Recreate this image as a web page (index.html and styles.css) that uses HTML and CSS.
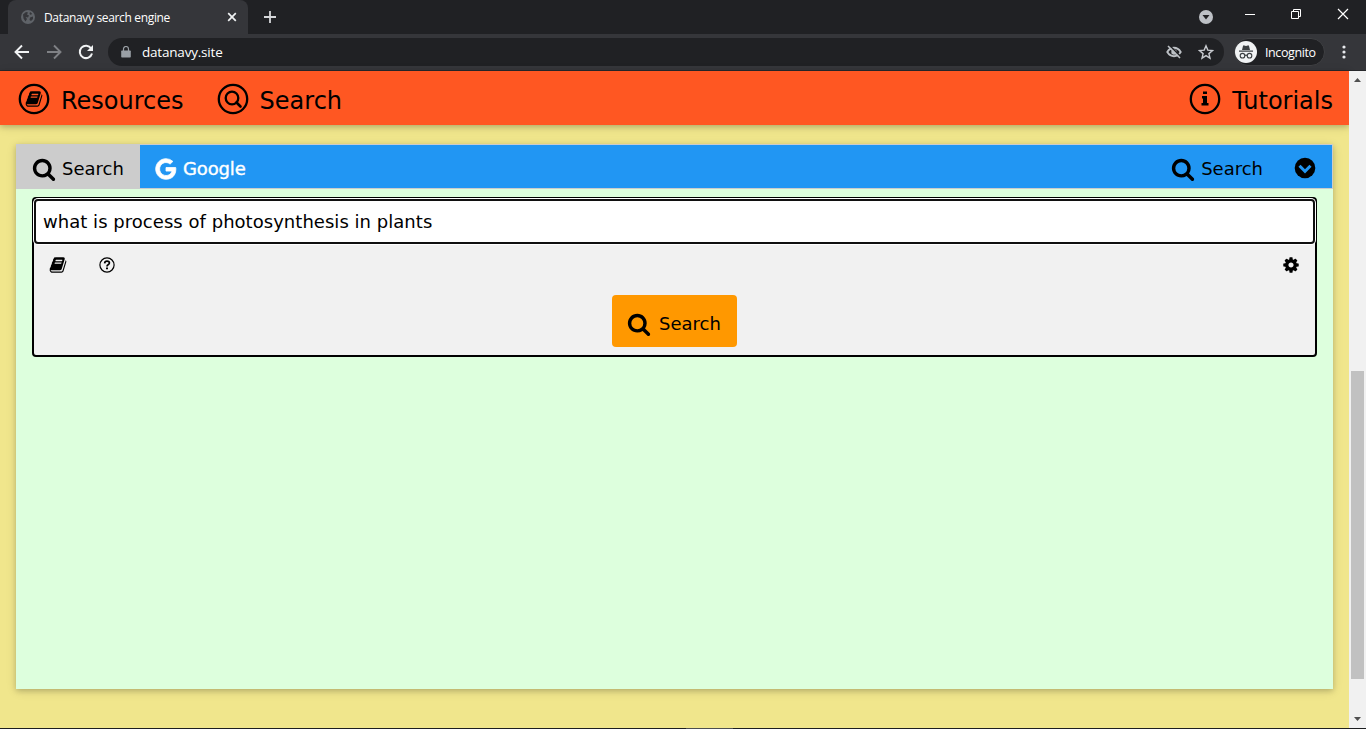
FILE: index.html
```html
<!DOCTYPE html>
<html lang="en">
<head>
<meta charset="utf-8">
<title>Datanavy search engine</title>
<link rel="stylesheet" href="styles.css">
</head>
<body>
<svg class="defs" width="0" height="0">
<symbol id="search" viewBox="0 0 1792 1792"><path d="M1216 832q0-185-131.5-316.5t-316.5-131.5-316.5 131.5-131.5 316.5 131.5 316.5 316.5 131.5 316.5-131.5 131.5-316.5zm512 832q0 52-38 90t-90 38q-54 0-90-38l-343-342q-179 124-399 124-143 0-273.5-55.5t-225-150-150-225-55.5-273.5 55.5-273.5 150-225 225-150 273.5-55.5 273.5 55.5 225 150 150 225 55.5 273.5q0 220-124 399l343 343q37 37 37 90z"/></symbol>
<symbol id="book" viewBox="0 0 1792 1792"><path d="M1703 478q40 57 18 129l-275 906q-19 64-76.5 107.5t-122.5 43.5h-923q-77 0-148.5-53.5t-99.5-131.5q-24-67-2-127 0-4 3-27t4-37q1-8-3-21.5t-3-19.5q2-11 8-21t16.5-23.5 16.5-23.5q23-38 45-91.5t30-91.5q3-10 .5-30t-.5-28q3-11 17-28t17-23q21-36 42-92t25-90q1-9-2.5-32t.5-28q4-13 22-30.5t22-22.5q19-26 42.5-84.5t27.5-96.5q1-8-3-25.5t-2-26.5q2-8 9-18t18-23 17-21q8-12 16.5-30.5t15-35 16-36 19.5-32 26.5-23.5 36-11.5 47.5 5.5l-1 3q38-9 51-9h761q74 0 114 56t18 130l-274 906q-36 119-71.5 153.5t-128.5 34.5h-869q-27 0-38 15-11 16-1 43 24 70 144 70h923q29 0 56-15.5t35-41.5l300-987q7-22 5-57 38 15 59 43zm-1064 2q-4 13 2 22.5t20 9.5h608q13 0 25.5-9.5t16.5-22.5l21-64q4-13-2-22.5t-20-9.5h-608q-13 0-25.5 9.5t-16.5 22.5zm-83 256q-4 13 2 22.5t20 9.5h608q13 0 25.5-9.5t16.5-22.5l21-64q4-13-2-22.5t-20-9.5h-608q-13 0-25.5 9.5t-16.5 22.5z"/></symbol>
</svg>

<header class="titlebar">
  <div class="tab">
    <svg class="globe" width="14" height="14" viewBox="0 0 14 14"><circle cx="7" cy="7" r="7" fill="#5f6368"/><path d="M2 4.500L5 2l2 .5L6 4.500l2 1-1 2-2.500-.5L6 9l-1.500 2.500-2-3zM9 2l2 1.500-1 1.500-1.500-1zM9 7.500l3-1v2.500l-2 2-1.500-1z" fill="#35363a"/></svg>
    <span class="tab-title">Datanavy search engine</span>
    <svg width="10" height="10" viewBox="0 0 10 10"><path d="M1.200 1.200l7.600 7.600M8.800 1.200L1.200 8.800" stroke="#f1f3f4" stroke-width="1.700"/></svg>
  </div>
  <svg class="plus" width="12" height="12" viewBox="0 0 12 12"><path d="M6 0v12M0 6h12" stroke="#d5d7da" stroke-width="1.800"/></svg>
  <div class="window-controls">
    <svg width="14" height="14" viewBox="0 0 14 14"><circle cx="7" cy="7" r="7" fill="#bdc1c6"/><path d="M3.500 5h7L7 9.500z" fill="#202124"/></svg>
    <svg width="10" height="12" viewBox="0 0 10 12"><path d="M0 6.500h10" stroke="#fff"/></svg>
    <svg width="10" height="12" viewBox="0 0 10 12"><path d="M.5 3.500h7v7h-7zM2.500 3V1.500h7v7H8" fill="none" stroke="#fff"/></svg>
    <svg width="12" height="12" viewBox="0 0 12 12"><path d="M1 1l10 10M11 1L1 11" stroke="#fff" stroke-width="1.200"/></svg>
  </div>
</header>
<nav class="toolbar">
  <svg width="16" height="16" viewBox="0 0 16 16"><path d="M15 8H2M8 1.500L1.500 8 8 14.500" fill="none" stroke="#f1f3f4" stroke-width="1.900"/></svg>
  <svg width="16" height="16" viewBox="0 0 16 16"><path d="M1 8h13M8 1.500L14.500 8 8 14.500" fill="none" stroke="#7f8185" stroke-width="1.900"/></svg>
  <svg width="16" height="16" viewBox="0 0 16 16"><path d="M13.200 4.500A6.200 6.200 0 1 0 14 9.500" fill="none" stroke="#f1f3f4" stroke-width="2"/><path d="M15 1v6H9z" fill="#f1f3f4"/></svg>
  <div class="address">
    <svg width="10" height="12" viewBox="0 0 10 12"><path d="M1 4.500h8q.8 0 .8.800v5.500q0 .8-.8.800H1q-.8 0-.8-.8V5.300q0-.8.800-.8z" fill="#9aa0a6"/><path d="M2.500 5V3a2.500 2.500 0 0 1 5 0v2" fill="none" stroke="#9aa0a6" stroke-width="1.200"/></svg>
    <span class="url">datanavy.site</span>
    <svg width="16" height="16" viewBox="0 0 16 16"><path d="M1.300 8q2.600-4.200 6.700-4.200T14.700 8q-2.600 4.200-6.700 4.200T1.300 8z" fill="none" stroke="#bdc1c6" stroke-width="1.900"/><circle cx="8" cy="8" r="2.700" fill="#bdc1c6"/><path d="M3.500 1.500l12 12" stroke="#202124" stroke-width="1.600"/><path d="M2 2l12 12" stroke="#bdc1c6" stroke-width="1.600"/></svg>
    <svg class="star" width="16" height="16" viewBox="0 0 16 16"><path d="M8 1.800l1.800 4.300 4.700.4-3.600 3.100 1.100 4.600-4-2.500-4 2.500 1.100-4.600L1.500 6.500l4.700-.4z" fill="none" stroke="#c8cbd0" stroke-width="1.400"/></svg>
  </div>
  <div class="profile">
    <svg width="22" height="22" viewBox="0 0 22 22"><circle cx="11" cy="11" r="11" fill="#f1f3f4"/><path d="M7 9l1-4q.3-.8 1.200-.6L11 5l1.800-.6q.9-.2 1.200.6l1 4zM4 9.500h14v1.300H4z" fill="#3c4043"/><g fill="none" stroke="#3c4043" stroke-width="1.100"><circle cx="7.500" cy="14.700" r="2.300"/><circle cx="14.500" cy="14.700" r="2.300"/><path d="M9.800 14.500q1.200-.8 2.400 0"/></g></svg>
    <span>Incognito</span>
  </div>
  <svg class="dots" width="4" height="14" viewBox="0 0 4 14"><g fill="#e8eaed"><circle cx="2" cy="2" r="1.600"/><circle cx="2" cy="7" r="1.600"/><circle cx="2" cy="12" r="1.600"/></g></svg>
</nav>

<div class="viewport">
  <main class="page">
    <div class="topnav">
      <a class="nav-item"><svg width="32" height="32" viewBox="0 0 32 32"><circle cx="16" cy="16" r="14.200" fill="none" stroke="#000" stroke-width="2.300"/><use href="#book" x="7" y="7" width="18" height="18"/></svg>Resources</a>
      <a class="nav-item"><svg width="32" height="32" viewBox="0 0 32 32"><circle cx="16" cy="16" r="14.200" fill="none" stroke="#000" stroke-width="2.300"/><circle cx="15" cy="15" r="6.300" fill="none" stroke="#000" stroke-width="2.300"/><path d="M19.500 19.500l4 4" stroke="#000" stroke-width="2.600" stroke-linecap="round"/></svg>Search</a>
      <a class="nav-item tutorials"><svg width="32" height="32" viewBox="0 0 32 32"><circle cx="16" cy="16" r="14.200" fill="none" stroke="#000" stroke-width="2.300"/><path d="M14 8.500h4V11h-4zM13 13h5v7h1.500v2.500h-7V20H14v-4.500h-1z"/></svg>Tutorials</a>
    </div>
    <section class="card">
      <div class="tabs">
        <a class="engine active"><svg width="24" height="24"><use href="#search"/></svg>Search</a>
        <a class="engine google"><svg width="24" height="24" viewBox="0 0 1792 1792"><path fill="#fff" stroke="#fff" stroke-width="60" d="M896 786h725q12 67 12 128 0 217-91 387.500t-259.500 266.500-386.500 96q-157 0-299-60.500t-245-163.500-163.500-245-60.500-299 60.500-299 163.500-245 245-163.500 299-60.500q300 0 515 201l-209 201q-123-119-306-119-129 0-238.500 65t-173.500 176.500-64 243.500 64 243.500 173.500 176.500 238.500 65q87 0 160-24t120-60 82-82 51.500-87 22.500-78h-436v-264z"/></svg>Google</a>
        <a class="engine right"><svg width="24" height="24"><use href="#search"/></svg>Search</a>
        <svg class="drop" width="22" height="22" viewBox="0 0 22 22"><circle cx="11" cy="11" r="10.300"/><path d="M5.500 8.800L11 14.300l5.500-5.500" fill="none" stroke="#2196f3" stroke-width="3"/></svg>
      </div>
      <div class="search-box">
        <div class="query">what is process of photosynthesis in plants</div>
        <div class="tools">
          <svg width="18" height="18"><use href="#book"/></svg>
          <svg class="help" width="16" height="16" viewBox="0 0 16 16"><circle cx="8" cy="8" r="7.100" fill="none" stroke="#000" stroke-width="1.200"/><path d="M5.600 6.300q.3-2.100 2.400-2.100 2.400 0 2.400 1.900 0 1-1.300 1.700Q8 8.400 8 9.500" fill="none" stroke="#000" stroke-width="1.700"/><path d="M7 10.500h2v1.700H7z"/></svg>
          <svg class="cog" width="18" height="18" viewBox="0 0 1792 1792"><path d="M1152 896q0-106-75-181t-181-75-181 75-75 181 75 181 181 75 181-75 75-181zm512-109v222q0 12-8 23t-20 13l-185 28q-19 54-39 91 35 50 107 138 10 12 10 25t-9 23q-27 37-99 108t-94 71q-12 0-26-9l-138-108q-44 23-91 38-16 136-29 186-7 28-36 28h-222q-14 0-24.500-8.500t-11.500-21.500l-28-184q-49-16-90-37l-141 107q-10 9-25 9-14 0-25-11-126-114-165-168-7-10-7-23 0-12 8-23 15-21 51-66.500t54-70.500q-27-50-41-99l-183-27q-13-2-21-12.500t-8-23.500v-222q0-12 8-23t19-13l186-28q14-46 39-92-40-57-107-138-10-12-10-24 0-10 9-23 26-36 98.500-107.500t94.500-71.500q13 0 26 10l138 107q44-23 91-38 16-136 29-186 7-28 36-28h222q14 0 24.500 8.500t11.500 21.500l28 184q49 16 90 37l142-107q9-9 24-9 13 0 25 10 129 119 165 170 7 8 7 22 0 12-8 23-15 21-51 66.500t-54 70.500q26 50 41 98l183 28q13 2 21 12.500t8 23.500z"/></svg>
        </div>
        <div class="go"><svg width="24" height="24"><use href="#search"/></svg>Search</div>
      </div>
    </section>
  </main>
  <aside class="scrollbar">
    <svg width="17" height="17" viewBox="0 0 17 17"><path d="M5 11h7L8.500 7z" fill="#505050"/></svg>
    <div class="thumb"></div>
    <svg class="down" width="17" height="17" viewBox="0 0 17 17"><path d="M5 6h7l-3.500 4z" fill="#505050"/></svg>
  </aside>
</div>
<footer class="taskbar"><div class="task"></div></footer>
</body>
</html>
```

FILE: styles.css
```css
* { box-sizing: border-box; }
body {
  margin: 0;
  width: 1366px;
  height: 729px;
  overflow: hidden;
  display: flex;
  flex-direction: column;
  font-family: "DejaVu Sans", Verdana, sans-serif;
  color: #000;
}
svg { display: block; flex: none; }
.defs { position: absolute; }

.titlebar {
  flex: none;
  height: 34px;
  display: flex;
  align-items: center;
  background: #202124;
  padding-left: 8px;
}
.tab {
  width: 240px;
  height: 34px;
  display: flex;
  align-items: center;
  padding: 0 11px 0 13px;
  background: #35363a;
  border-radius: 8px 8px 0 0;
  font: 12px "Open Sans", "Noto Sans", sans-serif;
  color: #fff;
}
.tab-title {
  flex: 1;
  margin-left: 9px;
  letter-spacing: -0.34px;
  white-space: nowrap;
}
.plus { margin-left: 16px; }
.window-controls {
  display: flex;
  align-items: center;
  align-self: flex-start;
  margin-left: auto;
  padding-right: 17px;
  height: 28px;
}
.window-controls svg + svg { margin-left: 36px; }
.window-controls svg:first-child { margin-top: 5px; }
.window-controls svg:nth-child(2) { margin-left: 32px; }
.window-controls svg:first-child { margin-right: 0; }

.toolbar {
  flex: none;
  height: 37px;
  display: flex;
  align-items: center;
  background: #35363a;
  border-bottom: 1px solid #28292c;
  padding: 0 20px 0 14px;
  font: 12px "Open Sans", "Noto Sans", sans-serif;
  color: #fff;
}
.toolbar > svg + svg { margin-left: 16px; }
.address {
  width: 1116px;
  height: 28px;
  margin-left: 14px;
  display: flex;
  align-items: center;
  background: #202124;
  border-radius: 14px;
  padding: 0 10px 0 13px;
}
.url {
  flex: 1;
  margin-left: 11px;
  font-size: 13.5px;
  letter-spacing: -0.2px;
}
.star { margin-left: 16px; }
.profile {
  width: 91px;
  height: 28px;
  margin-left: 10px;
  display: flex;
  align-items: center;
  gap: 8px;
  border: 1px solid #3f4043;
  border-radius: 14px;
  background: #202124;
  font-size: 12.5px;
  letter-spacing: -0.4px;
}
.dots { margin-left: auto; }

.viewport { height: 657px; display: flex; }
.page {
  width: 1349px;
  height: 657px;
  background: #f0e68c;
}
.topnav {
  height: 54px;
  display: flex;
  align-items: center;
  padding: 6px 16px 0 18px;
  background: #ff5722;
  box-shadow: 0 2px 5px rgba(0, 0, 0, .16), 0 2px 10px rgba(0, 0, 0, .12);
  font-size: 24px;
}
.nav-item { display: flex; align-items: center; gap: 11px; line-height: 36px; }
.nav-item svg { margin-top: -4px; }
.nav-item + .nav-item { margin-left: 33px; }
.topnav .tutorials { margin-left: auto; }

.card {
  width: 1317px;
  height: 545px;
  margin: 19px 0 0 16px;
  background: #ddffdd;
  box-shadow: 0 2px 5px rgba(0, 0, 0, .16), 0 2px 10px rgba(0, 0, 0, .12);
  font-size: 18px;
}
.tabs {
  height: 45px;
  display: flex;
  align-items: stretch;
  border: 1px solid #ccc;
  border-left: 0;
  background: #2196f3;
}
.engine { display: flex; align-items: center; gap: 6px; line-height: 27px; padding-top: 3px; }
.engine svg { margin-top: 1px; }
.engine.active { width: 124px; padding-left: 16px; background: #ccc; }
.google {
  color: #fff;
  padding-left: 14px;
  gap: 5px;
  letter-spacing: -0.15px;
  -webkit-text-stroke: .4px #fff;
}
.engine.right { margin-left: auto; }
.drop { margin: 12px 16px 0 31px; }

.search-box {
  width: 1285px;
  height: 160px;
  margin: 8px 16px 0;
  border: 2px solid #000;
  border-radius: 4px;
  background: #f1f1f1;
}
.query {
  height: 45px;
  border: 2px solid #101010;
  border-radius: 4px;
  box-shadow: 0 0 0 1px #fff;
  background: #fff;
  padding-left: 7px;
  line-height: 41px;
  letter-spacing: 0.035px;
}
.tools {
  height: 51px;
  display: flex;
  align-items: flex-start;
  padding: 12px 15px 0;
}
.help { margin: 1px 0 0 32px; }
.cog { margin-left: auto; }
.go {
  width: 125px;
  height: 52px;
  margin: 0 auto;
  padding: 5px 0 0 15px;
  display: flex;
  align-items: center;
  gap: 8px;
  border-radius: 4px;
  background: #ff9800;
}

.scrollbar {
  width: 17px;
  height: 657px;
  display: flex;
  flex-direction: column;
  background: #f1f1f1;
}
.thumb {
  width: 13px;
  height: 308px;
  margin: 283px 0 0 2px;
  background: #c1c1c1;
}
.down { margin-top: auto; }
.taskbar { flex: none; height: 1px; background: #1c1e20; padding-left: 686px; }
.task { width: 47px; height: 1px; background: #4c4e50; }
```
